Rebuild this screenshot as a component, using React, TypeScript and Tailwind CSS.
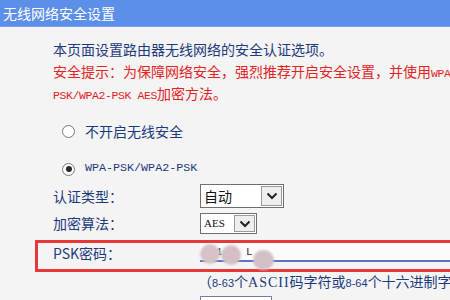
const cjk = "font-['Noto_Sans_CJK_SC',sans-serif]"
const mono = "font-['Liberation_Mono','Noto_Sans_CJK_SC',monospace]"

function Chevron() {
  return (
    <svg width="12" height="8" viewBox="0 0 12 8">
      <polyline points="1.5,1.5 6,6 10.5,1.5" fill="none" stroke="#222" strokeWidth="2" />
    </svg>
  )
}

function Select({ label, width, height, latin }: { label: string; width: string; height: string; latin?: boolean }) {
  return (
    <div className={`flex ${width} ${height} border border-[#6f6f6f] bg-white`}>
      <div
        className={`flex-1 pl-[3px] flex items-center text-[#111] ${
          latin ? "font-['Liberation_Serif',serif] text-[11px]" : "text-[14px]"
        }`}
      >
        {label}
      </div>
      <div className="w-[21px] m-[1px] border border-[#9a9a9a] bg-[#eeeeee] flex items-center justify-center">
        <Chevron />
      </div>
    </div>
  )
}

function Radio({ checked }: { checked?: boolean }) {
  return (
    <div className="w-[13px] h-[13px] rounded-full border border-[#7a7a7a] bg-white flex items-center justify-center">
      {checked && <div className="w-[6px] h-[6px] rounded-full bg-[#2a2a2a]" />}
    </div>
  )
}

export default function App() {
  return (
    <div className={`w-[450px] h-[300px] overflow-hidden bg-[#f4f4f4] text-[14px] text-[#1d3a7c] ${cjk}`}>
      <div className="h-[27px] bg-[#5c8fe7] border-b border-[#7aa3ee] pl-[3px] leading-[26px] text-white text-[14px]">
        无线网络安全设置
      </div>

      <div className="mt-[11px] pl-[53px] whitespace-nowrap">
        <p className="h-[22px] leading-[22px]">本页面设置路由器无线网络的安全认证选项。</p>
        <p className="h-[22px] leading-[22px] text-[#e2231f]">
          安全提示：为保障网络安全，强烈推荐开启安全设置，并使用
          <span className={`${mono} text-[11.5px] tracking-[-0.4px] leading-none`}>WPA-</span>
        </p>
        <p className="h-[22px] leading-[22px] text-[#e2231f]">
          <span className={`${mono} text-[11.5px] tracking-[-0.4px] leading-none`}>PSK/WPA2-PSK AES</span>加密方法。
        </p>
      </div>

      <div className="mt-[16px] pl-[62px] flex items-center gap-[10px] h-[22px]">
        <Radio />
        <span>不开启无线安全</span>
      </div>
      <div className="mt-[16px] pl-[62px] flex items-center gap-[10px] h-[22px]">
        <Radio checked />
        <span className={`${mono} text-[11.7px]`}>WPA-PSK/WPA2-PSK</span>
      </div>

      <div className="mt-[4px] pl-[53px] flex items-center h-[24px]">
        <span className="w-[147px] pt-[1px]">认证类型：</span>
        <Select label="自动" width="w-[84px]" height="h-[24px]" />
      </div>
      <div className="mt-[5px] pl-[53px] flex items-center h-[21px]">
        <span className="w-[147px]">加密算法：</span>
        <Select label="AES" width="w-[57px]" height="h-[21px]" latin />
      </div>

      <div className="mt-[6px] ml-[35px] w-[430px] h-[32px] border-[3px] border-[#e6383b] flex items-start pl-[15px]">
        <span className="w-[147px] h-[18px] leading-[18px] pt-[1px]">PSK密码：</span>
        <div className="relative flex-1 h-[19px] border-b-2 border-[#5b72c6] bg-[#fbfbfb]">
          <span className={`absolute left-[16px] top-[1px] ${mono} text-[11px] text-[#333]`}>1</span>
          <span className={`absolute left-[46px] top-[1px] ${mono} text-[11px] text-[#333]`}>L</span>
          <div className="absolute left-[0px] top-[1px] w-[20px] h-[20px] rounded-full bg-[#d7c2c6] blur-[1px]" />
          <div className="absolute left-[21px] top-[2px] w-[20px] h-[20px] rounded-full bg-[#d4c0c4] blur-[1px]" />
          <div className="absolute left-[53px] top-[7px] w-[21px] h-[20px] rounded-full bg-[#d2c1c6] blur-[1px]" />
        </div>
      </div>

      <div className="pl-[198px] h-[18px] leading-[18px] whitespace-nowrap">
        （<span className="font-['Liberation_Sans',sans-serif] text-[11px]">8-63</span>个
        <span className="font-['Liberation_Serif',serif] tracking-[1px]">ASCII</span>码字符或
        <span className="font-['Liberation_Sans',sans-serif] text-[11px]">8-64</span>个十六进制字符）
      </div>

      <div className="mt-[6px] pl-[53px] flex items-start">
        <span className="w-[147px] leading-[14px] pt-[3px]">组密钥更新周期：</span>
        <div className="w-[72px] h-[20px] border border-[#6f7fa8] bg-white" />
      </div>
    </div>
  )
}
